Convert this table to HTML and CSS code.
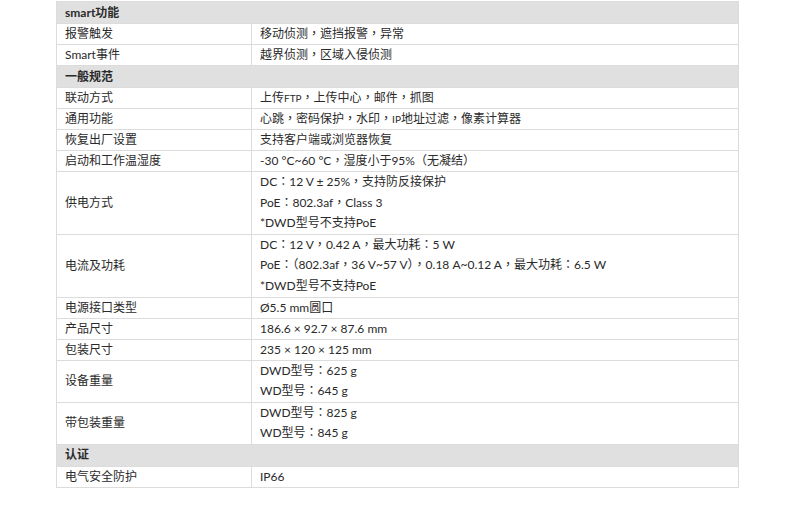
FILE: index.html
```html
<!DOCTYPE html>
<html>
<head>
<meta charset="utf-8">
<link rel="stylesheet" href="styles.css">
</head>
<body>
<div class="page">
<table class="spec">
  <colgroup><col class="c1"><col class="c2"></colgroup>
  <tr class="sec"><td colspan="2">smart功能</td></tr>
  <tr><td>报警触发</td><td>移动侦测<span class="p" lang="zh-TW">，</span>遮挡报警<span class="p" lang="zh-TW">，</span>异常</td></tr>
  <tr><td>Smart事件</td><td>越界侦测<span class="p" lang="zh-TW">，</span>区域入侵侦测</td></tr>
  <tr class="sec"><td colspan="2">一般规范</td></tr>
  <tr><td>联动方式</td><td>上传<span class="sm">FTP</span><span class="p" lang="zh-TW">，</span>上传中心<span class="p" lang="zh-TW">，</span>邮件<span class="p" lang="zh-TW">，</span>抓图</td></tr>
  <tr><td>通用功能</td><td>心跳<span class="p" lang="zh-TW">，</span>密码保护<span class="p" lang="zh-TW">，</span>水印<span class="p" lang="zh-TW">，</span><span class="sm">IP</span>地址过滤<span class="p" lang="zh-TW">，</span>像素计算器</td></tr>
  <tr><td>恢复出厂设置</td><td>支持客户端或浏览器恢复</td></tr>
  <tr><td>启动和工作温湿度</td><td>-30 °C~60 °C<span class="p" lang="zh-TW">，</span>湿度小于95%<span class="p" lang="zh-TW">（</span>无凝结<span class="p" lang="zh-TW">）</span></td></tr>
  <tr><td>供电方式</td><td><div class="ln">DC<span class="p" lang="zh-TW">：</span>12 V ± 25%<span class="p" lang="zh-TW">，</span>支持防反接保护</div><div class="ln">PoE<span class="p" lang="zh-TW">：</span>802.3af<span class="p" lang="zh-TW">，</span>Class 3</div><div class="ln">*DWD型号不支持PoE</div></td></tr>
  <tr><td>电流及功耗</td><td><div class="ln">DC<span class="p" lang="zh-TW">：</span>12 V<span class="p" lang="zh-TW">，</span>0.42 A<span class="p" lang="zh-TW">，</span>最大功耗<span class="p" lang="zh-TW">：</span>5 W</div><div class="ln">PoE<span class="p" lang="zh-TW">：（</span>802.3af<span class="p" lang="zh-TW">，</span>36 V~57 V<span class="p" lang="zh-TW">）</span><span class="p" lang="zh-TW">，</span>0.18 A~0.12 A<span class="p" lang="zh-TW">，</span>最大功耗<span class="p" lang="zh-TW">：</span>6.5 W</div><div class="ln">*DWD型号不支持PoE</div></td></tr>
  <tr><td>电源接口类型</td><td>Ø5.5 mm圆口</td></tr>
  <tr><td>产品尺寸</td><td>186.6 × 92.7 × 87.6 mm</td></tr>
  <tr><td>包装尺寸</td><td>235 × 120 × 125 mm</td></tr>
  <tr><td>设备重量</td><td><div class="ln">DWD型号<span class="p" lang="zh-TW">：</span>625 g</div><div class="ln">WD型号<span class="p" lang="zh-TW">：</span>645 g</div></td></tr>
  <tr><td>带包装重量</td><td><div class="ln">DWD型号<span class="p" lang="zh-TW">：</span>825 g</div><div class="ln">WD型号<span class="p" lang="zh-TW">：</span>845 g</div></td></tr>
  <tr class="sec"><td colspan="2">认证</td></tr>
  <tr><td>电气安全防护</td><td>IP66</td></tr>
</table>
</div>
</body>
</html>
```
FILE: styles.css
```css
html, body {
  margin: 0;
  padding: 0;
  background: #fff;
}
.page {
  padding: 1px 0 0 56px;
}
.spec {
  width: 683px;
  border-collapse: collapse;
  table-layout: fixed;
  font-family: "Lato", "Noto Sans CJK SC", sans-serif;
  font-size: 12px;
  color: #2a2a2a;
}
.spec col.c1 {
  width: 195px;
}
.spec td {
  border: 1px solid #dcdcdc;
  padding: 0 8px;
  height: 20px;
  line-height: 20px;
  vertical-align: middle;
  white-space: nowrap;
}
.spec .sec td {
  background: #e0e0e0;
  font-weight: bold;
  height: 21px;
}
.spec .ln {
  height: 20.6px;
  line-height: 20.6px;
}
.p {
  font-family: "Noto Sans CJK TC", sans-serif;
  line-height: 0;
}
.sm {
  font-size: 10px;
  line-height: 0;
}
```
